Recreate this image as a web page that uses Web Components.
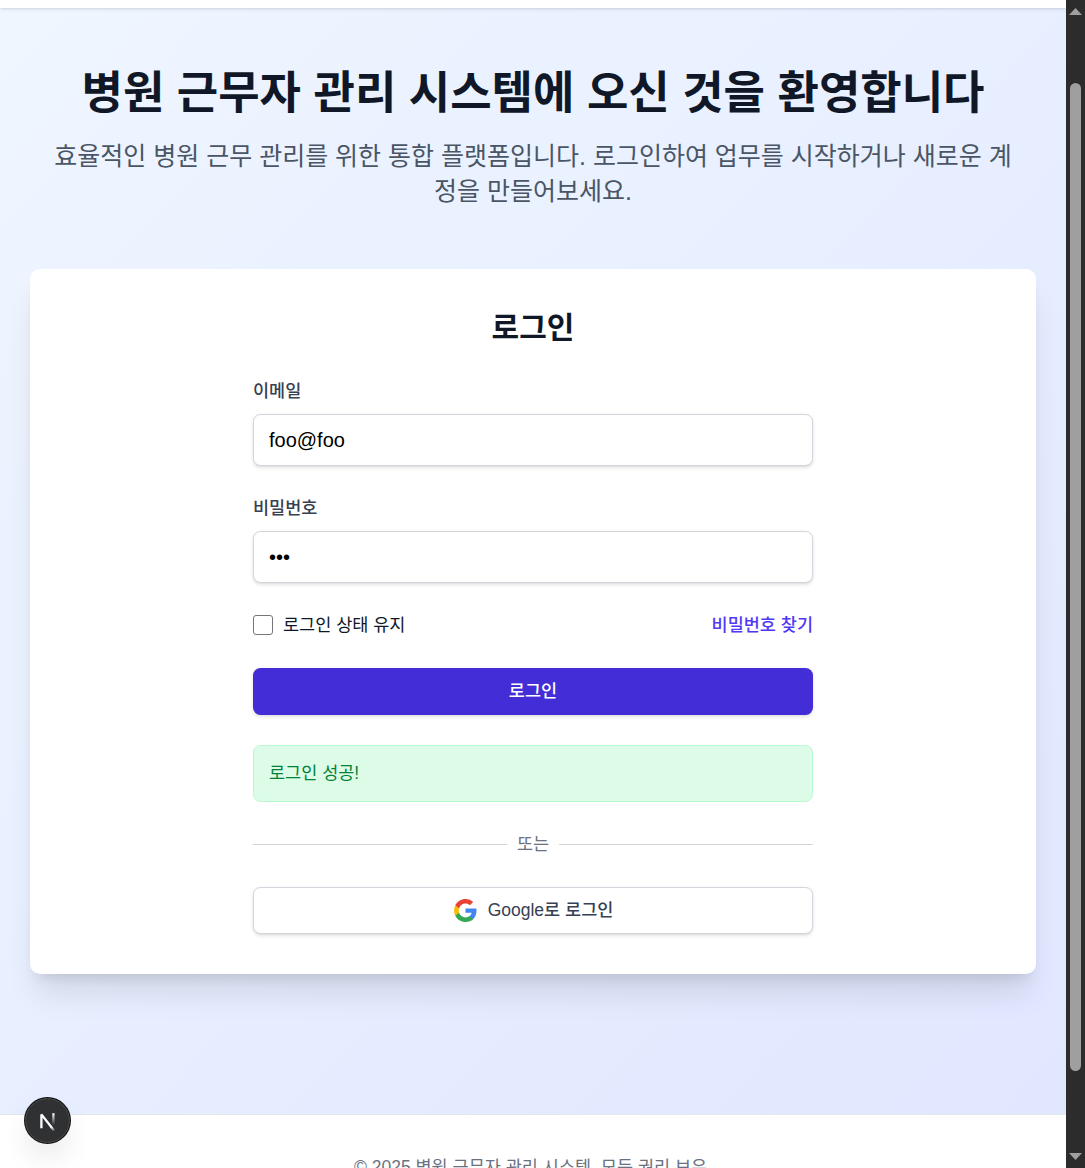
<!DOCTYPE html>
<html lang="ko">
<head>
<meta charset="utf-8">
<title>병원 근무자 관리 시스템</title>
<style>
html,body{margin:0;height:100%;overflow:hidden}
body{font-family:"Liberation Sans","Noto Sans CJK KR",sans-serif;color:#101828;font-size:17.5px;line-height:25px}
</style>
</head>
<body>
<app-shell>
  <app-header slot="page"></app-header>
  <page-main slot="page">
    <page-hero>
      <span slot="title">병원 근무자 관리 시스템에 오신 것을 환영합니다</span>
      <span>효율적인 병원 근무 관리를 위한 통합 플랫폼입니다. 로그인하여 업무를 시작하거나 새로운 계정을 만들어보세요.</span>
    </page-hero>
    <login-card heading="로그인">
      <text-field label="이메일" value="foo@foo"></text-field>
      <text-field label="비밀번호" type="password" value="abc"></text-field>
      <option-row><span>로그인 상태 유지</span><span slot="link">비밀번호 찾기</span></option-row>
      <submit-button>로그인</submit-button>
      <status-alert>로그인 성공!</status-alert>
      <or-divider>또는</or-divider>
      <google-button>Google로 로그인</google-button>
    </login-card>
  </page-main>
  <app-footer slot="page">© 2025 병원 근무자 관리 시스템. 모든 권리 보유.</app-footer>
  <scroll-bar slot="scroll"></scroll-bar>
</app-shell>
<dev-badge></dev-badge>
<script>
function define(name, css, html) {
  customElements.define(name, class extends HTMLElement {
    constructor() {
      super();
      const root = this.attachShadow({mode: 'open'});
      root.innerHTML = '<style>*{box-sizing:border-box}' + css + '</style>' +
        (typeof html === 'function' ? html(this) : html);
    }
  });
}
define('app-shell',
  ':host{display:flex;height:1168px;overflow:hidden}.page{flex:1;min-width:0;display:flex;flex-direction:column}',
  '<div class="page"><slot name="page"></slot></div><slot name="scroll"></slot>');
define('app-header',
  ':host{display:block;flex:none;height:8px;background:#fff;box-shadow:0 1.25px 3.75px rgba(0,0,0,.1),0 1.25px 2.5px -1.25px rgba(0,0,0,.1);position:relative;z-index:1}', '');
define('page-main',
  ':host{display:flex;flex:none;flex-direction:column;box-sizing:border-box;height:1106px;padding:61px 30px 0;background:linear-gradient(to bottom right,#eff6ff,#e0e7ff)}',
  '<slot></slot>');
define('page-hero',
  ':host{display:block;height:200px;text-align:center}h1{margin:0 0 20px;font-size:45px;line-height:50px;font-weight:700}p{margin:0 auto;max-width:960px;font-size:25px;line-height:35px;color:#4a5565}',
  '<h1><slot name="title"></slot></h1><p><slot></slot></p>');
define('login-card',
  ':host{display:flex;flex-direction:column;align-items:center;box-sizing:border-box;height:705px;background:#fff;border-radius:10px;padding-top:39px;box-shadow:0 25px 31.25px -6.25px rgba(0,0,0,.1),0 10px 12.5px -7.5px rgba(0,0,0,.1)}h2{margin:0 0 31px;font-size:30px;line-height:40px;font-weight:700}.form{display:flex;flex-direction:column;width:560px}',
  el => `<h2>${el.getAttribute('heading')}</h2><div class="form"><slot></slot></div>`);
define('text-field',
  ':host{display:block;height:117px}label{display:block;color:#364153;font-weight:500;line-height:25px;margin-bottom:10px}input{display:block;width:100%;height:52px;border:1px solid #d1d5dc;border-radius:7.5px;padding:0 15px;font:20px "Liberation Sans",sans-serif;color:#000;background:#fff;outline:none;box-shadow:0 1.25px 3.75px rgba(0,0,0,.1),0 1.25px 2.5px -1.25px rgba(0,0,0,.1)}',
  el => `<label>${el.getAttribute('label')}</label><input type="${el.getAttribute('type') || 'text'}" value="${el.getAttribute('value')}">`);
define('option-row',
  ':host{display:flex;align-items:center;height:25px;margin-bottom:30px}i{width:20px;height:20px;border:1.25px solid #767676;border-radius:3px;background:#fff;margin:0 10px 2px 0}.link{margin-left:auto;color:#4f39f6;font-weight:500}',
  '<i></i><slot></slot><div class="link"><slot name="link"></slot></div>');
define('submit-button',
  ':host{display:block;height:47px;margin-bottom:30px}button{display:block;width:100%;height:47px;padding:0;border:0;border-radius:7.5px;background:#432dd7;color:#fff;font:inherit;font-weight:500;box-shadow:0 1.25px 3.75px rgba(0,0,0,.1),0 1.25px 2.5px -1.25px rgba(0,0,0,.1)}',
  '<button><slot></slot></button>');
define('status-alert',
  ':host{display:flex;align-items:center;box-sizing:border-box;height:57px;margin-bottom:30px;padding:0 15px;border:1px solid #b9f8cf;border-radius:7.5px;background:#dcfce7;color:#008236}',
  '<slot></slot>');
define('or-divider',
  ':host{display:flex;align-items:center;gap:10px;height:25px;margin-bottom:30px;color:#6a7282}hr{flex:1;margin:0;border:0;height:1px;background:#d1d5dc}',
  '<hr><slot></slot><hr>');
define('google-button',
  ':host{display:block}button{display:flex;align-items:center;justify-content:center;width:100%;height:47px;padding:0 0 1px;border:1px solid #d1d5dc;border-radius:7.5px;background:#fff;color:#364153;font:inherit;font-weight:500;box-shadow:0 1.25px 3.75px rgba(0,0,0,.1),0 1.25px 2.5px -1.25px rgba(0,0,0,.1)}svg{width:25px;height:25px;margin:1px 10px 0 0}',
  `<button><svg viewBox="0 0 24 24"><path fill="#4285F4" d="M22.56 12.25c0-.78-.07-1.53-.2-2.25H12v4.26h5.92c-.26 1.37-1.04 2.53-2.21 3.31v2.77h3.57c2.08-1.92 3.28-4.74 3.28-8.09z"/><path fill="#34A853" d="M12 23c2.97 0 5.46-.98 7.28-2.66l-3.57-2.77c-.98.66-2.23 1.06-3.71 1.06-2.86 0-5.29-1.93-6.16-4.53H2.18v2.84C3.99 20.53 7.7 23 12 23z"/><path fill="#FBBC05" d="M5.84 14.09c-.22-.66-.35-1.36-.35-2.09s.13-1.43.35-2.09V7.07H2.18C1.43 8.55 1 10.22 1 12s.43 3.45 1.18 4.93l3.66-2.84z"/><path fill="#EA4335" d="M12 5.38c1.62 0 3.06.56 4.21 1.64l3.15-3.15C17.45 2.09 14.97 1 12 1 7.7 1 3.99 3.47 2.18 7.07l3.66 2.84c.87-2.6 3.3-4.53 6.16-4.53z"/></svg><slot></slot></button>`);
define('app-footer',
  ':host{display:block;flex:none;box-sizing:border-box;height:106px;padding-top:40px;border-top:1px solid #e5e7eb;background:#fff;color:#6a7282;text-align:center}',
  '<slot></slot>');
define('scroll-bar',
  ':host{display:flex;flex:none;flex-direction:column;align-items:center;box-sizing:border-box;width:19px;height:1168px;background:#2c2c2c;padding:8px 0}svg{display:block;width:13px;height:7px}.thumb{width:11px;height:988px;margin:68px 0 82px;border-radius:5.5px;background:#9f9f9f}',
  '<svg viewBox="0 0 13 7"><path d="M6.5 0 13 7H0z" fill="#9f9f9f"/></svg><div class="thumb"></div><svg viewBox="0 0 13 7"><path d="M0 0H13L6.5 7z" fill="#9f9f9f"/></svg>');
define('dev-badge',
  ':host{position:absolute;left:24px;top:1097px;width:47px;height:47px;border-radius:50%;z-index:5;box-shadow:0 16px 32px -8px rgba(0,0,0,.16)}svg{display:block}',
  `<svg width="47" height="47" viewBox="0 0 47 47" fill="none"><defs><linearGradient id="a" x1="18" y1="17" x2="31" y2="34" gradientUnits="userSpaceOnUse"><stop offset=".75" stop-color="#fff"/><stop offset="1" stop-color="#fff" stop-opacity="0"/></linearGradient><linearGradient id="b" x1="0" y1="16" x2="0" y2="28" gradientUnits="userSpaceOnUse"><stop stop-color="#fff"/><stop offset="1" stop-color="#fff" stop-opacity="0"/></linearGradient></defs><circle cx="23.5" cy="23.5" r="23.5" fill="#111"/><circle cx="23.5" cy="23.5" r="21.9" fill="#303132" stroke="#4c4c4c" stroke-width="1"/><path d="M17.4 31.3V17.4L30.2 33.7" stroke="url(#a)" stroke-width="2.3" stroke-linejoin="bevel"/><path d="M29.4 16.2v12" stroke="url(#b)" stroke-width="2.3"/></svg>`);
</script>
</body>
</html>
